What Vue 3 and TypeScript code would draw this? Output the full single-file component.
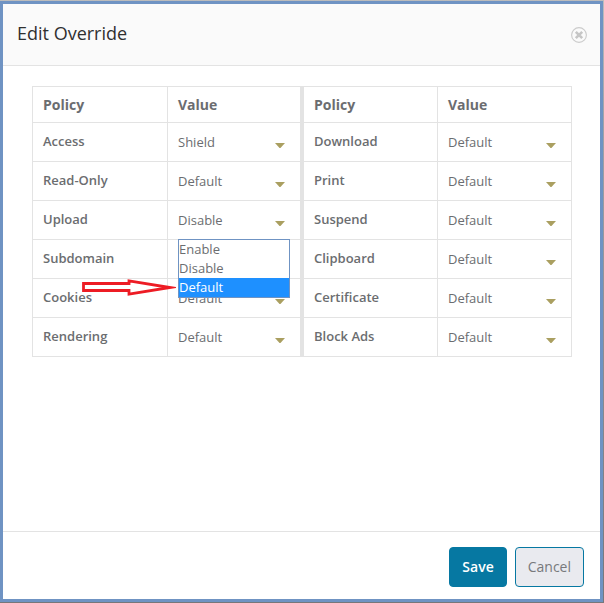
<script setup lang="ts">
import { reactive, ref } from 'vue'

type Policy = { id: string; label: string }

const rows: [Policy, Policy][] = [
  [{ id: 'access', label: 'Access' }, { id: 'download', label: 'Download' }],
  [{ id: 'readonly', label: 'Read-Only' }, { id: 'print', label: 'Print' }],
  [{ id: 'upload', label: 'Upload' }, { id: 'suspend', label: 'Suspend' }],
  [{ id: 'subdomain', label: 'Subdomain' }, { id: 'clipboard', label: 'Clipboard' }],
  [{ id: 'cookies', label: 'Cookies' }, { id: 'certificate', label: 'Certificate' }],
  [{ id: 'rendering', label: 'Rendering' }, { id: 'blockads', label: 'Block Ads' }],
]

const values = reactive<Record<string, string>>({})
rows.flat().forEach((p) => (values[p.id] = 'Default'))
values.access = 'Shield'
values.upload = 'Disable'

const options = ['Enable', 'Disable', 'Default']
const openId = ref('upload')
const highlighted = ref('Default')

function optionsFor(id: string): string[] {
  return id === 'access' ? ['Shield', ...options] : options
}

function choose(id: string, option: string) {
  values[id] = option
  openId.value = ''
}
</script>

<template>
  <div class="backdrop">
    <main class="dialog" role="dialog" aria-labelledby="dialog-title">
      <header class="head">
        <h1 id="dialog-title">Edit Override</h1>
        <button class="close" type="button" aria-label="Close">
          <svg viewBox="0 0 16 16" width="16" height="16" aria-hidden="true">
            <circle cx="8" cy="8" r="7.4" fill="none" stroke="#cbcbcb" stroke-width="1.1" />
            <path d="M4.8 4.8l6.4 6.4M11.2 4.8l-6.4 6.4" stroke="#c6c6c6" stroke-width="2.6" />
          </svg>
        </button>
      </header>

      <section class="body">
        <table>
          <colgroup>
            <col class="c1" /><col class="c2" /><col class="c3" /><col class="c4" />
          </colgroup>
          <thead>
            <tr>
              <th scope="col">Policy</th>
              <th scope="col" class="divide">Value</th>
              <th scope="col">Policy</th>
              <th scope="col">Value</th>
            </tr>
          </thead>
          <tbody>
            <tr v-for="(pair, r) in rows" :key="r">
              <template v-for="(p, i) in pair" :key="p.id">
                <td class="name"><label :for="p.id">{{ p.label }}</label></td>
                <td :class="{ divide: i === 0 }">
                  <div class="picker">
                    <select :id="p.id" v-model="values[p.id]">
                      <option v-for="o in optionsFor(p.id)" :key="o">{{ o }}</option>
                    </select>
                    <svg class="caret" viewBox="0 0 10 5" width="10" height="5" aria-hidden="true">
                      <path d="M0 0H10L5 5.5Z" fill="#aa9f60" />
                    </svg>
                    <template v-if="openId === p.id">
                      <ul class="menu" role="listbox" :aria-label="p.label">
                        <li
                          v-for="o in options"
                          :key="o"
                          role="option"
                          :aria-selected="o === highlighted"
                          :class="{ active: o === highlighted }"
                          @mouseenter="highlighted = o"
                          @click="choose(p.id, o)"
                        >{{ o }}</li>
                      </ul>
                      <svg class="pointer" viewBox="0 0 96 18" width="96" height="18" aria-hidden="true">
                        <path
                          d="M3.5 4.5H49V1.8L90 8.5L49 15.2V11.5H3.5Z"
                          fill="none"
                          stroke="#ed1c24"
                          stroke-width="2.8"
                          stroke-miterlimit="10"
                        />
                      </svg>
                    </template>
                  </div>
                </td>
              </template>
            </tr>
          </tbody>
        </table>
      </section>

      <footer class="foot">
        <button class="btn save" type="button">Save</button>
        <button class="btn cancel" type="button">Cancel</button>
      </footer>
    </main>
  </div>
</template>

<style>
body {
  margin: 0;
}
</style>

<style scoped>
.backdrop {
  box-sizing: border-box;
  min-height: 100vh;
  display: flex;
  padding: 1px 1px 1px 0;
  background: linear-gradient(#bcbcbc, #a2a2a6 20%, #77777a);
  font-family: "Open Sans", "Noto Sans", sans-serif;
  font-size: 13px;
  color: #6b6d70;
}
.dialog {
  flex: 1;
  min-width: 0;
  display: flex;
  flex-direction: column;
  border: 3px solid #6f93c3;
  background: #fff;
}
.head {
  display: flex;
  align-items: center;
  justify-content: space-between;
  height: 61px;
  padding: 0 13px 0 14px;
  background: #fafafa;
  border-bottom: 1px solid #e3e3e3;
}
h1 {
  margin: 0 0 4px;
  font-size: 18px;
  line-height: 24px;
  font-weight: 400;
  color: #303030;
}
.close {
  display: block;
  padding: 0;
  border: 0;
  background: none;
}
.close svg {
  display: block;
}
.body {
  flex: 1;
  padding: 20px 28px 20px 29px;
}
table {
  width: 100%;
  table-layout: fixed;
  border-spacing: 0;
  border-top: 1px solid #e3e3e3;
  border-left: 1px solid #e3e3e3;
}
.c1 { width: 135px; }
.c2 { width: 136px; }
.c3 { width: 134px; }
.c4 { width: 134px; }
th,
td {
  padding: 0 10px;
  border-right: 1px solid #e3e3e3;
  border-bottom: 1px solid #e3e3e3;
  text-align: left;
}
.divide {
  border-right-width: 4px;
}
th {
  height: 35px;
  font-size: 14px;
  line-height: 20px;
  font-weight: 700;
}
td {
  height: 38px;
}
.name {
  font-weight: 600;
  line-height: 18px;
}
.name label {
  display: block;
  padding-bottom: 2px;
}
.picker {
  position: relative;
  display: grid;
  align-items: center;
}
select {
  grid-area: 1 / 1;
  appearance: none;
  width: 100%;
  height: 38px;
  margin: 0;
  padding: 0;
  border: 0;
  background: none;
  font: inherit;
  color: inherit;
}
.caret {
  grid-area: 1 / 1;
  justify-self: end;
  margin: 7px 5px 0 0;
  pointer-events: none;
}
.menu {
  position: absolute;
  z-index: 1;
  top: 100%;
  left: 0;
  right: 0;
  margin: 0;
  padding: 0;
  list-style: none;
  border: 1px solid #6f93c3;
  background: #fff;
}
.menu li {
  height: 19px;
  line-height: 19px;
}
.menu .active {
  background: #1e90ff;
  color: #fff;
}
.pointer {
  position: absolute;
  z-index: 2;
  top: 78px;
  right: 114px;
  pointer-events: none;
}
.foot {
  display: flex;
  justify-content: flex-end;
  gap: 8px;
  padding: 15px 16px 12px;
  border-top: 1px solid #e3e3e3;
}
.btn {
  height: 40px;
  padding: 0 12px 2px;
  border: 1px solid #0678a2;
  border-radius: 4px;
  font: inherit;
  font-size: 14px;
}
.save {
  background: #0678a2;
  color: #fff;
  font-weight: 600;
}
.cancel {
  background: #e9eaef;
  color: #77797c;
}
</style>
